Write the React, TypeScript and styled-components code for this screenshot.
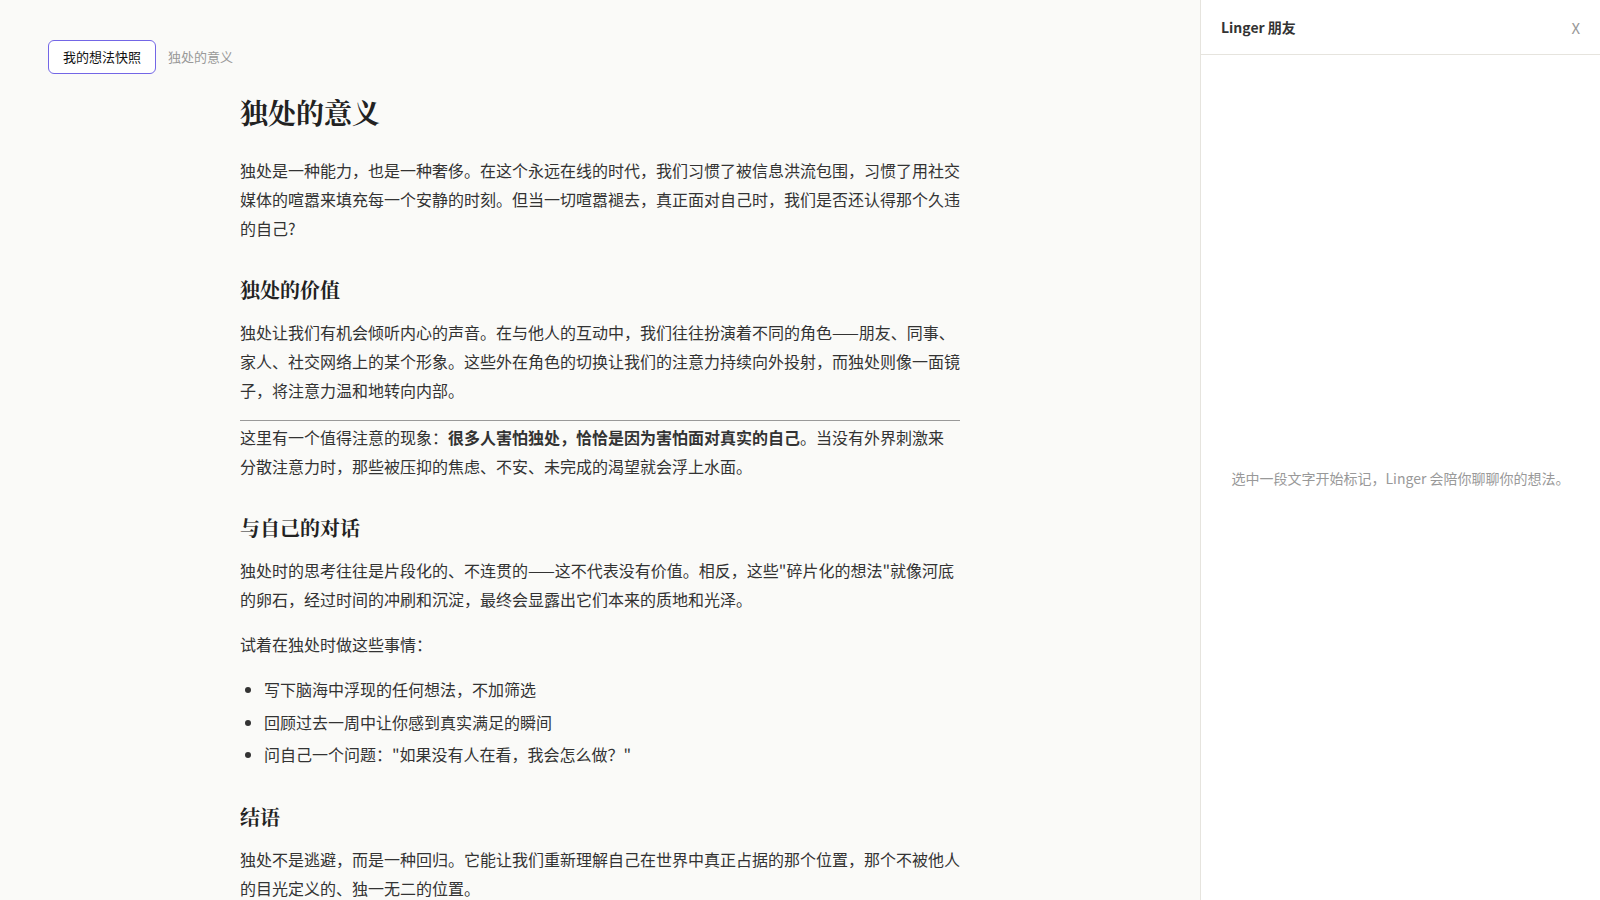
import React from 'react';
import styled, { createGlobalStyle } from 'styled-components';

const GlobalStyle = createGlobalStyle`
  * {
    box-sizing: border-box;
  }

  html,
  body {
    margin: 0;
    padding: 0;
    height: 100%;
    overflow: hidden;
  }

  body {
    font-family: 'Noto Sans CJK SC', 'Noto Sans', sans-serif;
    background: #fafaf8;
    color: #333;
  }
`;

const Layout = styled.div`
  display: flex;
  height: 100vh;
  width: 100vw;
`;

const Main = styled.main`
  flex: 1;
  min-width: 0;
  overflow: hidden;
  padding: 40px 48px 0;
  background: #fafaf8;
`;

const TabBar = styled.div`
  display: flex;
  align-items: center;
  gap: 12px;
`;

const Tab = styled.button<{ active?: boolean }>`
  font-family: inherit;
  font-size: 13px;
  line-height: 18px;
  padding: ${(props) => (props.active ? '7px 14px' : '7px 0')};
  border-radius: 6px;
  background: ${(props) => (props.active ? '#fff' : 'transparent')};
  border: ${(props) => (props.active ? '1px solid #7366e6' : 'none')};
  color: ${(props) => (props.active ? '#111' : '#999')};
  cursor: pointer;
`;

const Article = styled.article`
  width: 720px;
  margin: 20px auto 0;
  font-size: 16px;
  line-height: 1.8;
  color: #333;
`;

const Title = styled.h1`
  font-family: 'Noto Serif CJK SC', 'Noto Serif SC', 'Liberation Serif', serif;
  font-size: 28px;
  font-weight: 700;
  line-height: 36px;
  margin: 0 0 26px;
  color: #222;
`;

const Heading = styled.h2`
  font-family: 'Noto Serif CJK SC', 'Noto Serif SC', 'Liberation Serif', serif;
  font-size: 20px;
  font-weight: 700;
  line-height: 28px;
  margin: 34px 0 14px;
  color: #222;
`;

const Paragraph = styled.p`
  margin: 0 0 16px;
`;

const Divider = styled.hr`
  border: none;
  border-top: 1px solid #999;
  margin: -1px 0 2px;
`;

const List = styled.ul`
  margin: 0;
  padding-left: 24px;
`;

const ListItem = styled.li`
  margin-bottom: 4px;
`;

const Side = styled.aside`
  width: 400px;
  flex-shrink: 0;
  display: flex;
  flex-direction: column;
  background: #fff;
  border-left: 1px solid #e6e4de;
`;

const SideHeader = styled.header`
  height: 55px;
  display: flex;
  align-items: center;
  justify-content: space-between;
  padding: 0 20px;
  border-bottom: 1px solid #e6e4de;
`;

const SideTitle = styled.span`
  font-size: 14px;
  font-weight: 700;
  color: #333;
`;

const CloseButton = styled.button`
  font-family: inherit;
  font-size: 15px;
  color: #999;
  background: none;
  border: none;
  padding: 0;
  cursor: pointer;
`;

const SideBody = styled.div`
  flex: 1;
  display: flex;
  align-items: center;
  justify-content: center;
  padding: 0 24px;
`;

const EmptyHint = styled.p`
  margin: 0;
  font-size: 14px;
  color: #999;
  text-align: center;
`;

export default function App() {
  return (
    <>
      <GlobalStyle />
      <Layout>
        <Main>
          <TabBar>
            <Tab active>我的想法快照</Tab>
            <Tab>独处的意义</Tab>
          </TabBar>
          <Article>
            <Title>独处的意义</Title>
            <Paragraph>
              独处是一种能力，也是一种奢侈。在这个永远在线的时代，我们习惯了被信息洪流包围，习惯了用社交媒体的喧嚣来填充每一个安静的时刻。但当一切喧嚣褪去，真正面对自己时，我们是否还认得那个久违的自己?
            </Paragraph>

            <Heading>独处的价值</Heading>
            <Paragraph>
              独处让我们有机会倾听内心的声音。在与他人的互动中，我们往往扮演着不同的角色——朋友、同事、家人、社交网络上的某个形象。这些外在角色的切换让我们的注意力持续向外投射，而独处则像一面镜子，将注意力温和地转向内部。
            </Paragraph>
            <Divider />
            <Paragraph>
              这里有一个值得注意的现象：<strong>很多人害怕独处，恰恰是因为害怕面对真实的自己</strong>。当没有外界刺激来分散注意力时，那些被压抑的焦虑、不安、未完成的渴望就会浮上水面。
            </Paragraph>

            <Heading>与自己的对话</Heading>
            <Paragraph>
              独处时的思考往往是片段化的、不连贯的——这不代表没有价值。相反，这些"碎片化的想法"就像河底的卵石，经过时间的冲刷和沉淀，最终会显露出它们本来的质地和光泽。
            </Paragraph>
            <Paragraph>试着在独处时做这些事情：</Paragraph>
            <List>
              <ListItem>写下脑海中浮现的任何想法，不加筛选</ListItem>
              <ListItem>回顾过去一周中让你感到真实满足的瞬间</ListItem>
              <ListItem>问自己一个问题："如果没有人在看，我会怎么做？"</ListItem>
            </List>

            <Heading>结语</Heading>
            <Paragraph>
              独处不是逃避，而是一种回归。它能让我们重新理解自己在世界中真正占据的那个位置，那个不被他人的目光定义的、独一无二的位置。
            </Paragraph>
          </Article>
        </Main>
        <Side>
          <SideHeader>
            <SideTitle>Linger 朋友</SideTitle>
            <CloseButton>X</CloseButton>
          </SideHeader>
          <SideBody>
            <EmptyHint>选中一段文字开始标记，Linger 会陪你聊聊你的想法。</EmptyHint>
          </SideBody>
        </Side>
      </Layout>
    </>
  );
}
